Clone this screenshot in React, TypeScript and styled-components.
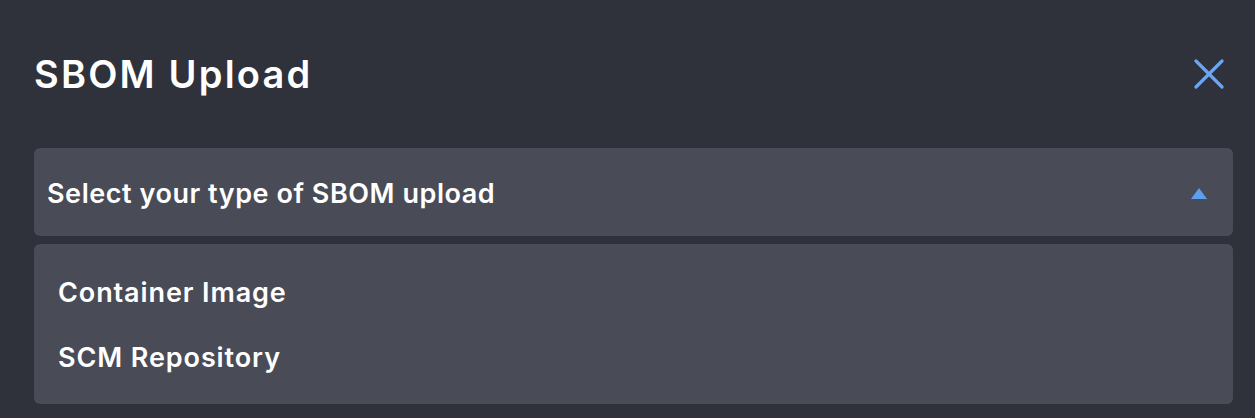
import React from "react";
import styled, { createGlobalStyle } from "styled-components";

const Global = createGlobalStyle`
  html, body { margin: 0; padding: 0; background: #2f313b; }
  body { font-family: Inter, Roboto, "Liberation Sans", sans-serif; color: #ffffff; }
  * { box-sizing: border-box; }
`;

const Modal = styled.div`
  width: 1255px;
  height: 418px;
  background: #2f313b;
  padding: 0 22px 0 34px;
  display: flex;
  flex-direction: column;
`;

const Header = styled.div`
  height: 148px;
  display: flex;
  align-items: center;
  justify-content: space-between;
`;

const Title = styled.h1`
  margin: 0;
  font-size: 38px;
  font-weight: 600;
  letter-spacing: 2.2px;
  color: #ffffff;
`;

const CloseButton = styled.button`
  background: none;
  border: none;
  padding: 0;
  width: 30px;
  height: 30px;
  margin-right: 9px;
  display: flex;
  align-items: center;
  justify-content: center;
  cursor: pointer;
`;

const SelectBox = styled.div`
  width: 1199px;
  height: 88px;
  background: #494b57;
  border-radius: 6px;
  display: flex;
  align-items: center;
  justify-content: space-between;
  padding: 3px 26px 0 13px;
`;

const SelectLabel = styled.span`
  font-size: 27px;
  font-weight: 600;
  letter-spacing: 0.55px;
  color: #ffffff;
`;

const Menu = styled.ul`
  list-style: none;
  margin: 8px 0 0;
  width: 1199px;
  height: 160px;
  background: #494b57;
  border-radius: 6px;
  padding: 32px 24px 0;
  display: flex;
  flex-direction: column;
  gap: 32px;
`;

const MenuItem = styled.li`
  font-size: 27px;
  font-weight: 600;
  line-height: 33px;
  letter-spacing: 0.9px;
  color: #ffffff;
`;

export default function App() {
  return (
    <>
      <Global />
      <Modal>
        <Header>
          <Title>SBOM Upload</Title>
          <CloseButton aria-label="Close">
            <svg width="30" height="30" viewBox="0 0 30 30">
              <path d="M2 2 L28 28 M28 2 L2 28" stroke="#6aa6f5" strokeWidth="3.2" strokeLinecap="round" />
            </svg>
          </CloseButton>
        </Header>
        <SelectBox>
          <SelectLabel>Select your type of SBOM upload</SelectLabel>
          <svg width="16" height="11" viewBox="0 0 16 11">
            <path d="M8 0 L16 11 L0 11 Z" fill="#5c9ef2" />
          </svg>
        </SelectBox>
        <Menu>
          <MenuItem>Container Image</MenuItem>
          <MenuItem>SCM Repository</MenuItem>
        </Menu>
      </Modal>
    </>
  );
}
